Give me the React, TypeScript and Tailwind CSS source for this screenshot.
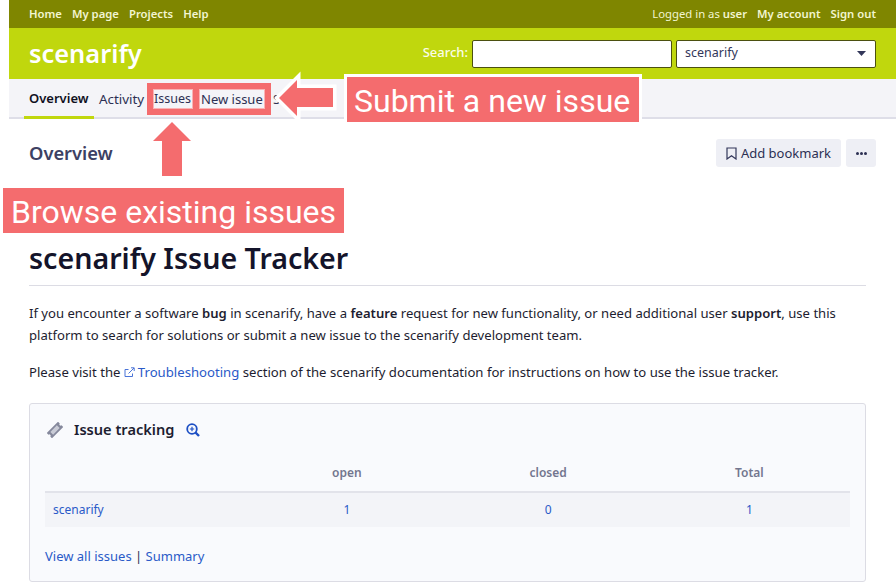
function Bookmark() {
  return (
    <svg width="11" height="13" viewBox="0 0 11 13" fill="none" stroke="#33375a" strokeWidth="1.2">
      <path d="M1 1h9v11L5.500 8.800 1 12z" />
    </svg>
  );
}

function Ticket() {
  return (
    <svg width="16" height="16" viewBox="-9 -9 18 18">
      <g transform="rotate(-45)">
        <path d="M-9 -4.200H9V-1.400A1.400 1.400 0 0 0 9 1.400V4.200H-9V1.400A1.400 1.400 0 0 0 -9 -1.400Z" fill="#85889c" />
        <rect x="-5.200" y="-2.200" width="10.400" height="4.400" fill="#c9cbd6" />
      </g>
    </svg>
  );
}

function ZoomPlus() {
  return (
    <svg width="14" height="14" viewBox="0 0 14 14" fill="none" stroke="#1d4fc4" strokeWidth="1.800">
      <circle cx="6" cy="6" r="4.800" />
      <path d="M9.500 9.500 13 13" strokeWidth="2.400" />
      <path d="M6 3.800v4.400M3.800 6h4.400" strokeWidth="1.200" />
    </svg>
  );
}

function External() {
  return (
    <svg width="11" height="11" viewBox="0 0 11 11" fill="none" stroke="#4a74d8" strokeWidth="1" className="mr-[3px] inline-block align-[-1px]">
      <path d="M8.500 6.500v3h-7.500v-7h3.500" />
      <path d="M4.500 6.500 10 1M7 .8h3.200V4" />
    </svg>
  );
}

export default function App() {
  return (
    <div className="relative h-[583px] w-[896px] overflow-hidden bg-white pl-[9px] text-[13.100px] text-[#1d1d30] [font-family:'Noto_Sans',sans-serif]">
      <div className="flex h-[28px] items-center justify-between bg-[#7f8600] px-[20px] text-[11.300px] font-semibold text-[#f2f5d0]">
        <div className="flex gap-[10px]">
          <span>Home</span>
          <span>My page</span>
          <span>Projects</span>
          <span>Help</span>
        </div>
        <div className="flex gap-[10px]">
          <span className="font-normal">
            Logged in as <span className="font-semibold">user</span>
          </span>
          <span>My account</span>
          <span>Sign out</span>
        </div>
      </div>

      <div className="flex h-[51px] items-center justify-between bg-[#c0d70d] px-[20px]">
        <span className="text-[25.400px] font-semibold text-white">scenarify</span>
        <div className="flex items-center gap-[4px]">
          <span className="pb-[2px] text-[13px] font-medium text-[#fbfde8]">Search:</span>
          <div className="h-[28px] w-[200px] rounded-[2px] border border-[#4b5010] bg-white" />
          <div className="flex h-[28px] w-[200px] items-center justify-between rounded-[2px] border border-[#4b5010] bg-white pl-[8px] pr-[9px] text-[12.500px] text-[#33375a]">
            <span>scenarify</span>
            <svg width="9" height="5" viewBox="0 0 9 5" fill="#33375a">
              <path d="M0 0h9L4.500 5z" />
            </svg>
          </div>
        </div>
      </div>

      <div className="flex h-[40px] items-stretch border-b-2 border-[#dedee8] bg-[#f4f4f8] pl-[15px] text-[13px] text-[#2c3053]">
        <div className="-mb-[2px] flex w-[70px] items-center border-b-[3px] border-[#c0d70d] pl-[5px] pt-[3px] font-semibold text-[#10101f]">
          Overview
        </div>
        <div className="flex w-[55px] items-center pl-[5px] pt-[3px] text-[13.400px]">Activity</div>
        <div className="flex w-[47px] items-center whitespace-nowrap pl-[5px] pt-[3px] text-[12.500px]">Issues</div>
        <div className="flex w-[72px] items-center whitespace-nowrap pl-[5px] pt-[3px]">New issue</div>
        <div className="flex items-center pl-[5px] pt-[3px]">Summary</div>
      </div>

      <div className="px-[20px]">
        <div className="flex items-center justify-between pt-[20px]">
          <h2 className="text-[18.300px] font-semibold text-[#3d4163]">Overview</h2>
          <div className="flex gap-[5px]">
            <div className="flex h-[28px] w-[125px] items-center justify-center gap-[4px] rounded-[3px] bg-[#eeeff5] text-[13px] text-[#2c3053]">
              <Bookmark />
              <span className="pt-[1px]">Add bookmark</span>
            </div>
            <div className="flex h-[28px] w-[30px] items-center justify-center gap-[1px] rounded-[3px] bg-[#eeeff5]">
              <span className="h-[3px] w-[3px] rounded-full bg-[#2c3053]" />
              <span className="h-[3px] w-[3px] rounded-full bg-[#2c3053]" />
              <span className="h-[3px] w-[3px] rounded-full bg-[#2c3053]" />
            </div>
          </div>
        </div>

        <div className="pr-[10px]">
          <h1 className="mt-[71px] border-b border-[#dcdce4] pb-[7px] text-[28.600px] font-semibold leading-[40px] text-[#14142a]">
            scenarify Issue Tracker
          </h1>
          <p className="mt-[16px] leading-[22px]">
            If you encounter a software <b className="font-semibold">bug</b> in scenarify, have a <b className="font-semibold">feature</b> request for new functionality, or need additional user <b className="font-semibold">support</b>, use this platform to search for solutions or submit a new issue to the scenarify development team.
          </p>
          <p className="mt-[15px] text-[13.150px] leading-[22px]">
            Please visit the <span className="text-[#2a5ac8]"><External />Troubleshooting</span> section of the scenarify documentation for instructions on how to use the issue tracker.
          </p>

          <div className="mt-[20px] h-[179px] rounded-[3px] border border-[#dcdce4] bg-[#f9fafd] px-[15px] pt-[14px]">
            <div className="flex h-[24px] items-center">
              <span className="ml-[2px]"><Ticket /></span>
              <span className="ml-[11px] text-[14.600px] font-semibold text-[#1d1d30]">Issue tracking</span>
              <span className="ml-[12px]"><ZoomPlus /></span>
            </div>
            <div className="mt-[13px] grid h-[38px] grid-cols-4 items-center border-b-2 border-[#e2e3ea] text-center text-[12px] font-semibold text-[#73768f]">
              <span />
              <span>open</span>
              <span>closed</span>
              <span>Total</span>
            </div>
            <div className="grid h-[34px] grid-cols-4 items-center bg-[#f3f4f8] text-center text-[12px] text-[#2a5ac8]">
              <span className="pl-[8px] text-left">scenarify</span>
              <span>1</span>
              <span>0</span>
              <span>1</span>
            </div>
            <div className="mt-[20px] text-[13px] text-[#2a5ac8]">
              View all issues <span className="text-[#2c3053]">|</span> Summary
            </div>
          </div>
        </div>
      </div>

      <div className="absolute left-[147px] top-[83px] h-[32px] w-[52px] border-[6px] border-[#f46c6e] shadow-[inset_0_0_0_1px_#f9b4b6]" />
      <div className="absolute left-[193px] top-[83px] h-[32px] w-[78px] border-[6px] border-[#f46c6e] shadow-[inset_0_0_0_1px_#f9b4b6]" />

      <svg className="absolute left-[148px] top-[116px]" width="48" height="62" viewBox="0 0 48 62">
        <path d="M24 6 5 25h9v35h20V25h9z" fill="#f46c6e" stroke="white" strokeWidth="3" paintOrder="stroke" />
      </svg>
      <svg className="absolute left-[270px] top-[68px]" width="70" height="62" viewBox="0 0 70 62">
        <path d="M9 30 27 12v8h36v19H27v9z" fill="#f46c6e" stroke="white" strokeWidth="7" paintOrder="stroke" />
      </svg>

      <div className="absolute left-[344px] top-[74px] flex h-[51px] w-[298px] items-center border-[3px] border-white bg-[#f46c6e] pl-[7px] pt-[2px] text-[32px] text-white [font-family:Roboto,sans-serif]">
        Submit a new issue
      </div>
      <div className="absolute left-[3px] top-[188px] flex h-[45px] w-[341px] items-center bg-[#f46c6e] pl-[8px] pt-[2px] text-[32px] text-white [font-family:Roboto,sans-serif]">
        Browse existing issues
      </div>
    </div>
  );
}
